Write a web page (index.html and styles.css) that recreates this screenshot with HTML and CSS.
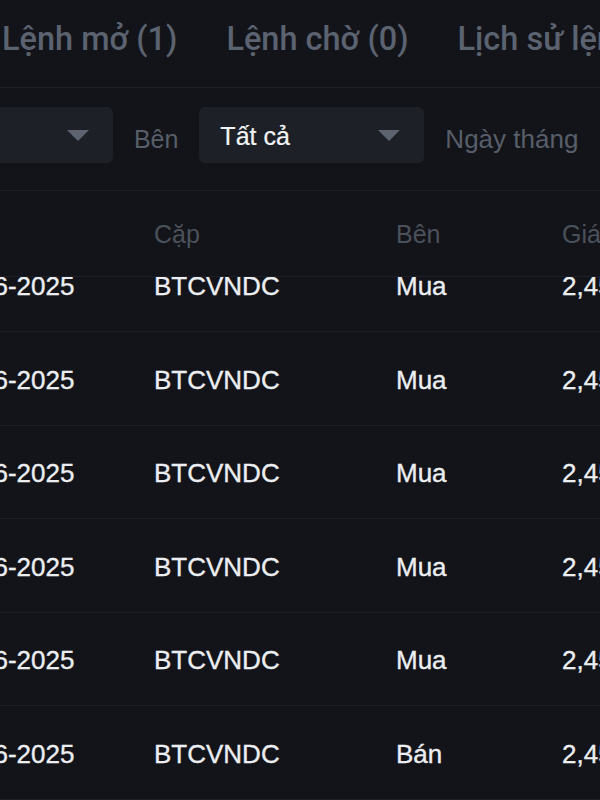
FILE: index.html
```html
<!DOCTYPE html>
<html lang="vi">
<head>
<meta charset="utf-8">
<link rel="stylesheet" href="styles.css">
</head>
<body>
<div class="page">
  <nav class="tabs">
    <span class="tab">Lệnh mở (1)</span>
    <span class="tab">Lệnh chờ (0)</span>
    <span class="tab">Lịch sử lệnh</span>
  </nav>
  <div class="filters">
    <span class="flabel">Cặp</span>
    <div class="select"><span class="sval">Tất cả</span><span class="caret"></span></div>
    <span class="flabel">Bên</span>
    <div class="select"><span class="sval">Tất cả</span><span class="caret"></span></div>
    <span class="flabel wide">Ngày tháng</span>
  </div>
  <div class="table">
    <div class="thead row">
      <span>Thời gian</span><span>Cặp</span><span>Bên</span><span>Giá</span>
    </div>
    <div class="tbody">
      <div class="rows">
        <div class="row"><span>10:21:45 16-06-2025</span><span>BTCVNDC</span><span>Mua</span><span>2,450,000,000</span></div>
        <div class="row"><span>10:18:02 16-06-2025</span><span>BTCVNDC</span><span>Mua</span><span>2,450,000,000</span></div>
        <div class="row"><span>10:12:37 16-06-2025</span><span>BTCVNDC</span><span>Mua</span><span>2,450,000,000</span></div>
        <div class="row"><span>09:58:14 16-06-2025</span><span>BTCVNDC</span><span>Mua</span><span>2,450,000,000</span></div>
        <div class="row"><span>09:41:50 16-06-2025</span><span>BTCVNDC</span><span>Mua</span><span>2,450,000,000</span></div>
        <div class="row"><span>09:30:09 16-06-2025</span><span>BTCVNDC</span><span>Bán</span><span>2,450,000,000</span></div>
      </div>
    </div>
  </div>
</div>
</body>
</html>
```

FILE: styles.css
```css
html, body {
  margin: 0;
  padding: 0;
  background: #131419;
  width: 600px;
  height: 800px;
  overflow: hidden;
}
.page {
  font-family: "Liberation Sans", Arial, sans-serif;
  color: #eceef1;
  width: 600px;
  height: 800px;
  overflow: hidden;
}
.tabs {
  display: flex;
  gap: 49px;
  height: 88px;
  align-items: center;
  padding-left: 2px;
  padding-bottom: 9px;
  box-sizing: border-box;
  border-bottom: 1px solid #1c1f27;
  white-space: nowrap;
  font-family: Roboto, "Noto Sans", sans-serif;
  font-weight: 500;
  font-size: 32.5px;
  color: #5b6270;
}
.filters {
  display: flex;
  align-items: center;
  gap: 21px;
  height: 102px;
  margin-left: -179px;
  border-bottom: 1px solid #1c1f27;
  white-space: nowrap;
}
.flabel {
  font-size: 25px;
  color: #575e69;
  margin-top: 1px;
}
.flabel.wide {
  font-size: 26px;
}
.select {
  width: 225px;
  height: 56px;
  flex: none;
  box-sizing: border-box;
  border-radius: 6px;
  background: #1d2027;
  display: flex;
  align-items: center;
  justify-content: space-between;
  padding: 0 24px 0 21px;
  margin-bottom: 8px;
}
.sval {
  font-size: 25px;
  color: #f2f3f5;
  -webkit-text-stroke: 0.2px #f2f3f5;
  padding-top: 3px;
}
.caret {
  width: 0;
  height: 0;
  border-left: 11px solid transparent;
  border-right: 11px solid transparent;
  border-top: 11px solid #5e646f;
}
.table {
  margin-left: -167px;
}
.row {
  display: grid;
  grid-template-columns: 321px 242px 166px 1fr;
  align-items: center;
  white-space: nowrap;
}
.thead {
  height: 86px;
  border-bottom: 1px solid #1c1f27;
  font-size: 25px;
  color: #4b515b;
  padding-top: 2px;
  box-sizing: border-box;
}
.tbody {
  height: 524px;
  overflow: hidden;
}
.rows {
  margin-top: -38.5px;
}
.rows .row {
  height: 93.5px;
  box-sizing: border-box;
  border-bottom: 1px solid #1c1f27;
  padding-top: 4px;
  font-size: 26px;
  color: #eceef1;
  -webkit-text-stroke: 0.35px #eceef1;
}
```
